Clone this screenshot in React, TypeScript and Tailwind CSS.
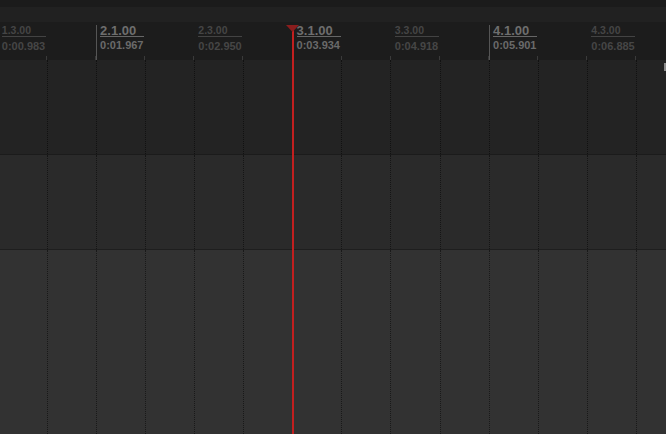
import React from 'react'

const font = { fontFamily: '"Liberation Sans", Arial, sans-serif' }

const marks = [
  { label: '1.3.00', time: '0:00.983', bar: false },
  { label: '2.1.00', time: '0:01.967', bar: true },
  { label: '2.3.00', time: '0:02.950', bar: false },
  { label: '3.1.00', time: '0:03.934', bar: true },
  { label: '3.3.00', time: '0:04.918', bar: false },
  { label: '4.1.00', time: '0:05.901', bar: true },
  { label: '4.3.00', time: '0:06.885', bar: false },
]

const beats = Array.from({ length: 14 }, (_, i) => i)

const RulerMark = ({ label, time, bar }: { label: string; time: string; bar: boolean }) => (
  <div className="w-[98.25px] shrink-0 h-full flex flex-col pt-[3px]">
    <div
      className={
        bar
          ? 'flex-1 flex flex-col border-l border-[#555555] pl-[3px]'
          : 'flex-1 flex flex-col border-l border-transparent pl-[3px]'
      }
    >
      {bar ? (
        <div className="w-[44px] border-b border-[#666666] text-[13px] leading-[11px] font-bold text-[#6e6e6e]">
          {label}
        </div>
      ) : (
        <div className="w-[44px] border-b border-[#434343] text-[10.5px] leading-[11px] font-bold text-[#454545]">
          {label}
        </div>
      )}
      <div
        className={
          bar
            ? 'mt-[3px] text-[11px] leading-[11px] font-bold text-[#6a6a6a]'
            : 'mt-[4px] text-[11px] leading-[11px] font-bold text-[#464646]'
        }
      >
        {time}
      </div>
      <div className="flex-1" />
      <div className="flex -ml-[4px]">
        <div className="w-[49.125px] h-[4px] border-r border-[#3a3a3a]" />
        <div className="w-[49.125px] h-[4px] border-r border-[#3a3a3a]" />
      </div>
    </div>
  </div>
)

const TrackRow = ({ className }: { className: string }) => (
  <div className={className}>
    <div className="flex h-full -ml-[1.6px]">
      {beats.map((b) => (
        <div key={b} className="w-[49.125px] shrink-0 h-full border-r border-dotted border-black/50" />
      ))}
    </div>
  </div>
)

export default function App() {
  return (
    <div className="relative w-[666px] h-[434px] overflow-hidden bg-[#1b1b1b] flex flex-col" style={font}>
      <div className="h-[7px] bg-[#1b1b1b]" />
      <div className="h-[15px] bg-[#212121]" />
      <div className="h-[38px] bg-[#1c1c1c] flex -ml-[2.2px]">
        {marks.map((m) => (
          <RulerMark key={m.label} {...m} />
        ))}
      </div>
      <TrackRow className="h-[95px] bg-[#232323] border-b border-[#1b1b1b] overflow-hidden" />
      <TrackRow className="h-[95px] bg-[#2a2a2a] border-b border-[#1e1e1e] overflow-hidden" />
      <TrackRow className="flex-1 bg-[#323232] overflow-hidden" />

      {/* playhead */}
      <div className="absolute left-[292px] top-[25px] bottom-0 w-[1.5px] bg-[#c21f1f]" />
      <svg className="absolute left-[286px] top-[25px]" width="13" height="7" viewBox="0 0 13 7">
        <polygon points="0,0 13,0 6.5,7" fill="#8a1d1d" />
      </svg>

      {/* scroll edge mark */}
      <div className="absolute left-[664px] top-[63px] w-[2px] h-[8px] bg-[#8a8a8a]" />
    </div>
  )
}
